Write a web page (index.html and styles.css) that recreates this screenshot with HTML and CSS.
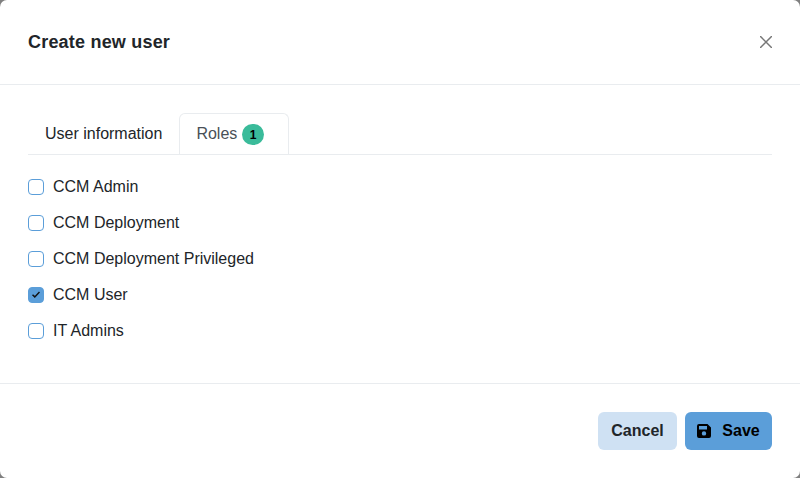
FILE: index.html
```html
<!DOCTYPE html>
<html lang="en">
<head>
<meta charset="utf-8">
<title>Create new user</title>
<link rel="stylesheet" href="styles.css">
</head>
<body>
<div class="modal" role="dialog" aria-labelledby="title">
  <header class="modal-header">
    <h5 class="modal-title" id="title">Create new user</h5>
    <button class="close" type="button" aria-label="Close">
      <svg width="12" height="12" viewBox="0 0 12 12"><path d="M.5.5l11 11M11.5.5l-11 11" fill="none" stroke="#777" stroke-width="1.5" stroke-linecap="round"/></svg>
    </button>
  </header>
  <main class="modal-body">
    <nav class="tabs">
      <a class="tab">User information</a>
      <a class="tab active">Roles <span class="badge">1</span></a>
    </nav>
    <div class="roles">
      <label class="check"><input type="checkbox"><span>CCM Admin</span></label>
      <label class="check"><input type="checkbox"><span>CCM Deployment</span></label>
      <label class="check"><input type="checkbox"><span>CCM Deployment Privileged</span></label>
      <label class="check"><input type="checkbox" checked><span>CCM User</span></label>
      <label class="check"><input type="checkbox"><span>IT Admins</span></label>
    </div>
  </main>
  <footer class="modal-footer">
    <button class="btn cancel" type="button">Cancel</button>
    <button class="btn save" type="button">
      <svg width="14" height="14" viewBox="0 0 14 14"><path fill="#000" fill-rule="evenodd" d="M2 0H10.500L14 3.500V12a2 2 0 0 1-2 2H2a2 2 0 0 1-2-2V2a2 2 0 0 1 2-2zM2 2v3.500h8V2zM7 7.200a2.200 2.200 0 1 0 0 4.400 2.200 2.200 0 0 0 0-4.400z"/></svg>
      <span>Save</span>
    </button>
  </footer>
</div>
</body>
</html>
```

FILE: styles.css
```css
* { box-sizing: border-box; }

body {
  margin: 0;
  background: #808080;
  color: #212529;
  font: 16px/24px "Liberation Sans", Arial, sans-serif;
}

.modal {
  display: flex;
  flex-direction: column;
  height: 478px;
  background: #fff;
  border-radius: 7px;
}

.modal-header {
  display: flex;
  align-items: center;
  justify-content: space-between;
  height: 85px;
  padding: 0 28px;
  border-bottom: 1px solid #e9ecef;
}

.modal-title {
  margin: 0;
  font-size: 18px;
  font-weight: 700;
  letter-spacing: 0.2px;
}

.close {
  display: flex;
  padding: 0;
  border: 0;
  background: none;
}

.modal-body {
  flex: 1;
  padding: 28px 28px 0;
}

.tabs {
  display: flex;
  height: 42px;
  border-bottom: 1px solid #e9ecef;
}

.tab {
  height: 41px;
  padding: 8px 16px;
  border: 1px solid transparent;
  border-bottom: 0;
  border-radius: 6px 6px 0 0;
}

.tab.active {
  width: 110px;
  color: #495057;
  background: #fff;
  border-color: #e9ecef;
}

.badge {
  display: inline-block;
  padding: 5px 8px 4px;
  border-radius: 11px;
  background: #3abb9a;
  color: #000;
  font-size: 12px;
  font-weight: 700;
  line-height: 12px;
}

.roles {
  display: grid;
  gap: 12px;
  padding-top: 20px;
}

.check {
  display: flex;
  align-items: center;
  gap: 9px;
  height: 24px;
}

.check input {
  width: 16px;
  height: 16px;
  margin: 0;
  appearance: none;
  border: 1px solid #5b9ed9;
  border-radius: 4px;
  background: #fff;
}

.check input:checked {
  background: #5b9ed9 url("data:image/svg+xml,%3Csvg xmlns='http://www.w3.org/2000/svg' viewBox='0 0 8 8'%3E%3Cpath d='M.5 3.700l2.300 2.200L7.500 1' fill='none' stroke='%23111' stroke-width='1.500'/%3E%3C/svg%3E") center / 8px no-repeat;
}

.modal-footer {
  display: flex;
  align-items: center;
  justify-content: flex-end;
  gap: 8px;
  height: 95px;
  padding: 0 28px;
  border-top: 1px solid #e9ecef;
}

.btn {
  display: flex;
  align-items: center;
  justify-content: center;
  height: 38px;
  padding: 0;
  border: 0;
  border-radius: 6px;
  font: 700 16px/24px "Liberation Sans", Arial, sans-serif;
}

.cancel {
  width: 79px;
  background: #cfe1f3;
  color: #212529;
}

.save {
  width: 87px;
  gap: 11px;
  background: #5b9ed9;
  color: #000;
}
```
